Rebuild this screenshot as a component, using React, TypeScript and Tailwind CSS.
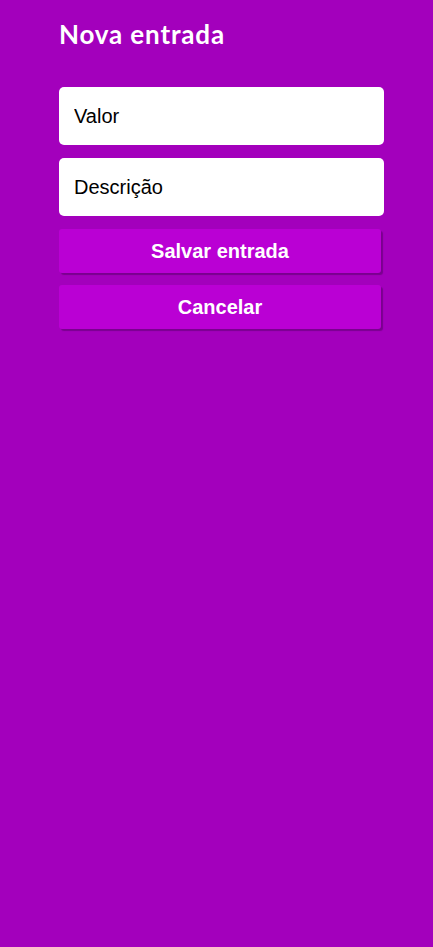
import React from "react";

export default function App() {
  return (
    <div className="min-h-[947px] w-full bg-[#a300bc] flex">
      <div className="ml-[59px] w-[325px] flex flex-col pt-[17px]">
        <h1 className="text-[26px] leading-[34px] font-bold text-white font-['Lato','Noto_Sans',sans-serif] tracking-[0.85px]">
          Nova entrada
        </h1>
        <div className="mt-[36px] flex flex-col gap-[13px]">
          <input
            placeholder="Valor"
            className="h-[58px] w-full rounded-[5px] bg-white px-[15px] text-[20px] text-black placeholder:text-black outline-none font-['Liberation_Sans',Arial,sans-serif]"
          />
          <input
            placeholder="Descrição"
            className="h-[58px] w-full rounded-[5px] bg-white px-[15px] text-[20px] text-black placeholder:text-black outline-none font-['Liberation_Sans',Arial,sans-serif]"
          />
        </div>
        <div className="mt-[13px] flex flex-col gap-[12px] pr-[3px]">
          <button className="h-[44px] w-full rounded-[3px] bg-[#ba00d4] text-white text-[20px] font-bold shadow-[2px_2px_1px_#7a008f] font-['Liberation_Sans',Arial,sans-serif]">
            Salvar entrada
          </button>
          <button className="h-[44px] w-full rounded-[3px] bg-[#ba00d4] text-white text-[20px] font-bold shadow-[2px_2px_1px_#7a008f] font-['Liberation_Sans',Arial,sans-serif]">
            Cancelar
          </button>
        </div>
      </div>
    </div>
  );
}
